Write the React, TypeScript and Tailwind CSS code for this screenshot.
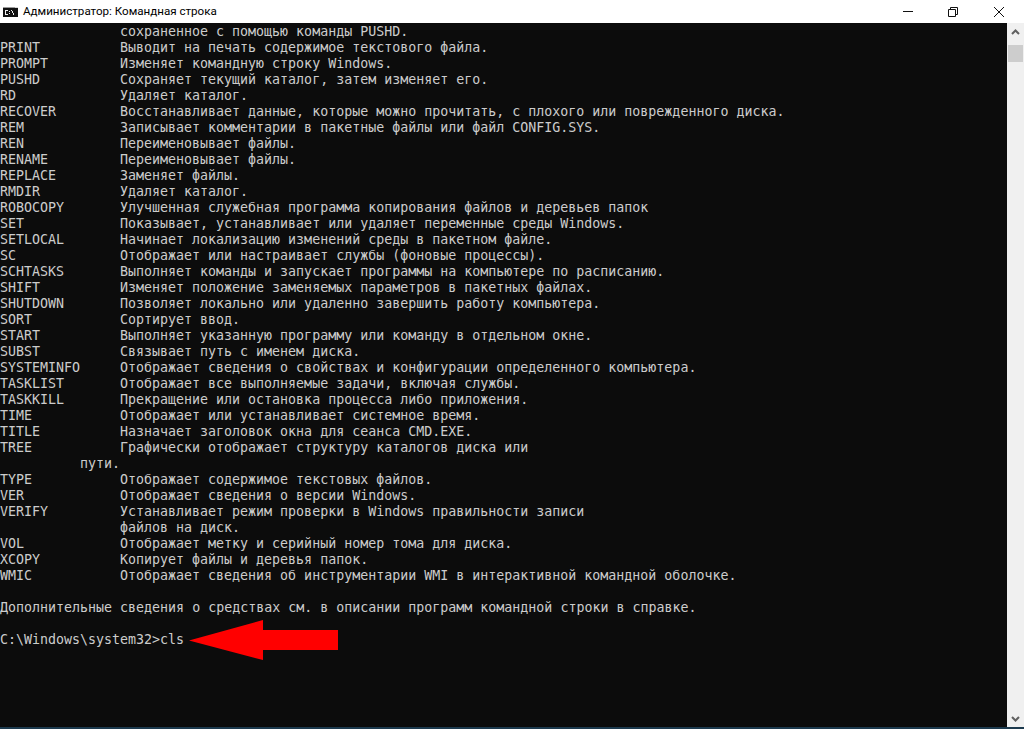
const lines = [
  ["", "сохраненное с помощью команды PUSHD."],
  ["PRINT", "Выводит на печать содержимое текстового файла."],
  ["PROMPT", "Изменяет командную строку Windows."],
  ["PUSHD", "Сохраняет текущий каталог, затем изменяет его."],
  ["RD", "Удаляет каталог."],
  ["RECOVER", "Восстанавливает данные, которые можно прочитать, с плохого или поврежденного диска."],
  ["REM", "Записывает комментарии в пакетные файлы или файл CONFIG.SYS."],
  ["REN", "Переименовывает файлы."],
  ["RENAME", "Переименовывает файлы."],
  ["REPLACE", "Заменяет файлы."],
  ["RMDIR", "Удаляет каталог."],
  ["ROBOCOPY", "Улучшенная служебная программа копирования файлов и деревьев папок"],
  ["SET", "Показывает, устанавливает или удаляет переменные среды Windows."],
  ["SETLOCAL", "Начинает локализацию изменений среды в пакетном файле."],
  ["SC", "Отображает или настраивает службы (фоновые процессы)."],
  ["SCHTASKS", "Выполняет команды и запускает программы на компьютере по расписанию."],
  ["SHIFT", "Изменяет положение заменяемых параметров в пакетных файлах."],
  ["SHUTDOWN", "Позволяет локально или удаленно завершить работу компьютера."],
  ["SORT", "Сортирует ввод."],
  ["START", "Выполняет указанную программу или команду в отдельном окне."],
  ["SUBST", "Связывает путь с именем диска."],
  ["SYSTEMINFO", "Отображает сведения о свойствах и конфигурации определенного компьютера."],
  ["TASKLIST", "Отображает все выполняемые задачи, включая службы."],
  ["TASKKILL", "Прекращение или остановка процесса либо приложения."],
  ["TIME", "Отображает или устанавливает системное время."],
  ["TITLE", "Назначает заголовок окна для сеанса CMD.EXE."],
  ["TREE", "Графически отображает структуру каталогов диска или"],
];

const lines2 = [
  ["TYPE", "Отображает содержимое текстовых файлов."],
  ["VER", "Отображает сведения о версии Windows."],
  ["VERIFY", "Устанавливает режим проверки в Windows правильности записи"],
  ["", "файлов на диск."],
  ["VOL", "Отображает метку и серийный номер тома для диска."],
  ["XCOPY", "Копирует файлы и деревья папок."],
  ["WMIC", "Отображает сведения об инструментарии WMI в интерактивной командной оболочке."],
];

function Row({ name, text }: { name: string; text: string }) {
  return (
    <div className="flex h-4">
      <span className="w-[120px] shrink-0">{name}</span>
      <span>{text}</span>
    </div>
  );
}

export default function App() {
  return (
    <div className="w-[1024px] h-[729px] flex flex-col overflow-hidden bg-white">
      {/* Title bar */}
      <header className="h-[23px] shrink-0 flex items-center bg-white text-black">
        <svg width="16" height="16" viewBox="0 0 16 16" className="ml-[2px] mr-[5px] mt-[1px]">
          <rect x="1" y="3" width="15" height="10" fill="#111" />
          <rect x="1" y="3" width="15" height="1" fill="#9a9a9a" />
          <rect x="13" y="3" width="3" height="1" fill="#d8d8d8" />
          <path d="M3 6h3v1H4v3h2v1H3zM7 7h1v1H7zM7 9h1v1H7zM9 6h1v1h1v2h1v2h-1V9h-1V7H9z" fill="#f0f0f0" />
        </svg>
        <span className="font-['Roboto',sans-serif] text-[11.6px] leading-none mt-[1px]">Администратор: Командная строка</span>
        <div className="ml-auto flex items-center h-full">
          <svg width="10" height="1" viewBox="0 0 10 1" className="mr-[35px]">
            <rect width="10" height="1" fill="#111" />
          </svg>
          <svg width="10" height="10" viewBox="0 0 10 10" className="mr-[36px]">
            <path d="M0.5 2.5h7v7h-7zM2.5 2.5v-2h7v7h-2" fill="none" stroke="#111" />
          </svg>
          <svg width="10" height="10" viewBox="0 0 10 10" className="mr-[20px]">
            <path d="M0 0L10 10M10 0L0 10" stroke="#111" />
          </svg>
        </div>
      </header>

      <div className="flex-1 flex min-h-0">
        {/* Console */}
        <main className="relative flex-1 pt-[1px] bg-[#0c0c0c] text-[#cccccc] font-['DejaVu_Sans_Mono',monospace] text-[13.3px] leading-4 whitespace-pre">
          {lines.map(([name, text], i) => (
            <Row key={i} name={name} text={text} />
          ))}
          <div className="h-4 pl-[80px]">пути.</div>
          {lines2.map(([name, text], i) => (
            <Row key={i} name={name} text={text} />
          ))}
          <div className="h-4" />
          <div className="h-4">Дополнительные сведения о средствах см. в описании программ командной строки в справке.</div>
          <div className="h-4" />
          <div className="h-4">{"C:\\Windows\\system32>cls"}</div>

          {/* Red arrow annotation */}
          <svg width="150" height="42" viewBox="0 0 150 42" className="absolute left-[189px] top-[597px]">
            <path d="M0 20.5L74 0V10H149V30H74V40Z" fill="#ff0000" />
          </svg>
        </main>

        {/* Scrollbar */}
        <aside className="w-[17px] shrink-0 flex flex-col items-center bg-[#f0f0f0]">
          <div className="h-[17px] w-full flex items-center justify-center">
            <svg width="9" height="6" viewBox="0 0 9 6">
              <path d="M1 5L4.5 1.5L8 5" fill="none" stroke="#606060" strokeWidth="2" />
            </svg>
          </div>
          <div className="mt-[5px] ml-[-1px] h-[17px] w-[15px] bg-[#cdcdcd]" />
          <div className="mt-auto h-[17px] w-full flex items-center justify-center">
            <svg width="9" height="6" viewBox="0 0 9 6">
              <path d="M1 1L4.5 4.5L8 1" fill="none" stroke="#606060" strokeWidth="2" />
            </svg>
          </div>
        </aside>
      </div>
      <div className="h-[2px] shrink-0 bg-[#1c3a4e]" />
    </div>
  );
}
